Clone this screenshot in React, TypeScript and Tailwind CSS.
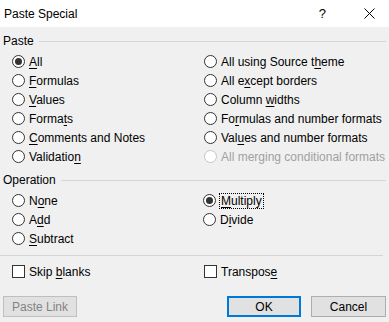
import React from "react";

const font = { fontFamily: '"Liberation Sans", Arial, sans-serif' };

function Label({ text, u, disabled }: { text: string; u: number; disabled?: boolean }) {
  return (
    <span className={disabled ? "text-[#a0a0a0]" : "text-black"}>
      {text.slice(0, u)}
      <span className="underline underline-offset-[2px]">{text[u]}</span>
      {text.slice(u + 1)}
    </span>
  );
}

function Radio({ text, u, checked, disabled, focus }: { text: string; u: number; checked?: boolean; disabled?: boolean; focus?: boolean }) {
  return (
    <div className="flex h-[19px] items-center">
      <div
        className={`flex h-[13px] w-[13px] shrink-0 items-center justify-center rounded-full border bg-white ${
          disabled ? "border-[#c6c6c6] bg-[#f0f0f0]" : "border-[#333333]"
        }`}
      >
        {checked && <div className="h-[7px] w-[7px] rounded-full bg-[#333333]" />}
      </div>
      <div className={`ml-[3px] ${focus ? "border border-dotted border-black px-[1px] leading-[14px]" : "pl-[1px] pr-[1px]"}`}>
        <Label text={text} u={u} disabled={disabled} />
      </div>
    </div>
  );
}

function Check({ text, u }: { text: string; u: number }) {
  return (
    <div className="flex h-[19px] items-center">
      <div className="h-[13px] w-[13px] shrink-0 border border-[#333333] bg-white" />
      <div className="ml-[4px]">
        <Label text={text} u={u} />
      </div>
    </div>
  );
}

function Header({ text }: { text: string }) {
  return (
    <div className="flex h-[16px] items-center pl-[3px] pr-[3px]">
      <span className="text-black">{text}</span>
      <div className="ml-[5px] h-px flex-1 bg-[#d5d5d5]" />
    </div>
  );
}

export default function App() {
  return (
    <div className="h-[322px] w-[389px] overflow-hidden bg-[#f0f0f0] text-[12px] leading-[16px]" style={font}>
      <div className="flex h-[27px] items-center bg-white pl-[4px]">
        <span className="flex-1 text-black">Paste Special</span>
        <span className="mr-[38px] text-[13px] text-black">?</span>
        <svg width="11" height="11" viewBox="0 0 11 11" className="mr-[14px]">
          <path d="M0.5 0.5L10.5 10.5M10.5 0.5L0.5 10.5" stroke="#000" strokeWidth="1" />
        </svg>
      </div>
      <div className="pt-[6px]">
        <Header text="Paste" />
        <div className="mt-[3px] grid grid-cols-[192px_1fr] pl-[12px]">
          <div className="flex flex-col">
            <Radio text="All" u={0} checked />
            <Radio text="Formulas" u={0} />
            <Radio text="Values" u={0} />
            <Radio text="Formats" u={5} />
            <Radio text="Comments and Notes" u={0} />
            <Radio text="Validation" u={9} />
          </div>
          <div className="flex flex-col">
            <Radio text="All using Source theme" u={18} />
            <Radio text="All except borders" u={5} />
            <Radio text="Column widths" u={7} />
            <Radio text="Formulas and number formats" u={2} />
            <Radio text="Values and number formats" u={3} />
            <Radio text="All merging conditional formats" u={99} disabled />
          </div>
        </div>
        <div className="mt-[6px]">
          <Header text="Operation" />
        </div>
        <div className="mt-[3px] grid grid-cols-[191px_1fr] pl-[12px]">
          <div className="flex flex-col">
            <Radio text="None" u={1} />
            <Radio text="Add" u={1} />
            <Radio text="Subtract" u={0} />
          </div>
          <div className="flex flex-col">
            <Radio text="Multiply" u={0} checked focus />
            <Radio text="Divide" u={1} />
          </div>
        </div>
        <div className="mt-[7px] mr-[6px] h-px bg-[#d5d5d5]" />
        <div className="mt-[6px] grid grid-cols-[192px_1fr] pl-[12px]">
          <Check text="Skip blanks" u={5} />
          <Check text="Transpose" u={8} />
        </div>
        <div className="mt-[15px] flex px-[3px]">
          <div className="flex h-[21px] w-[74px] items-center justify-center border border-[#bfbfbf] bg-[#e1e1e1] text-[#838383]">
            Paste Link
          </div>
          <div className="flex-1" />
          <div className="flex h-[21px] w-[74px] items-center justify-center border-2 border-[#0078d7] bg-[#e1e1e1] text-black">
            OK
          </div>
          <div className="ml-[10px] flex h-[21px] w-[75px] items-center justify-center border border-[#adadad] bg-[#e1e1e1] text-black">
            Cancel
          </div>
        </div>
      </div>
    </div>
  );
}
